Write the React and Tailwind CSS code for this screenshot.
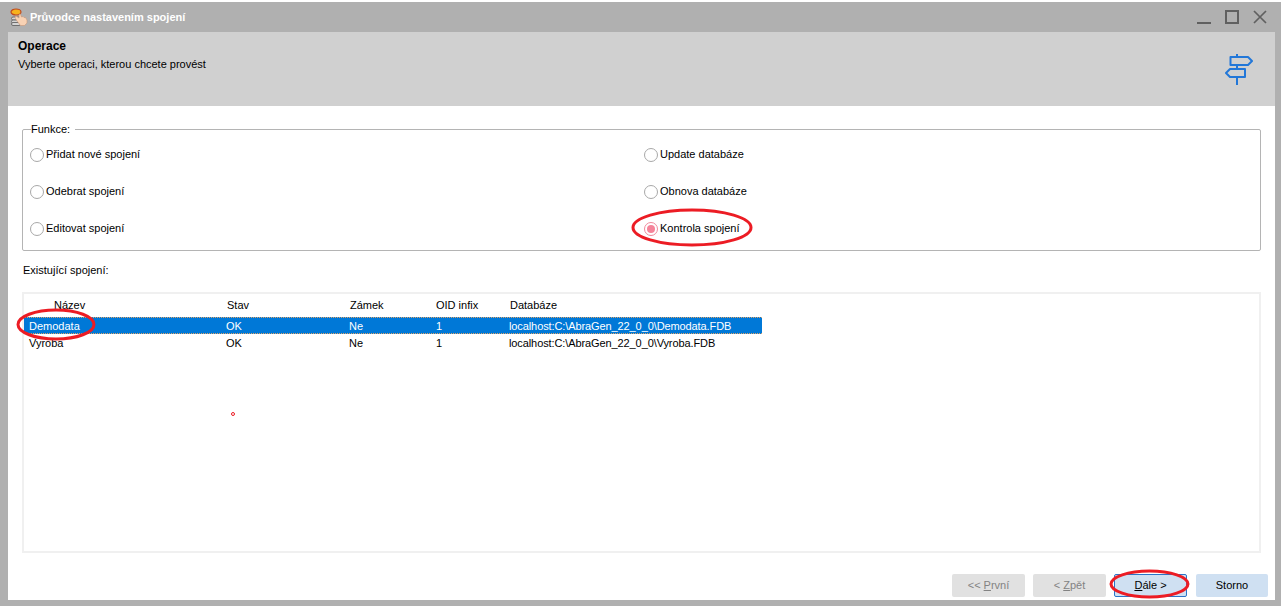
import React from 'react';

const FONT = "font-['Liberation_Sans',Arial,sans-serif]";

const AppIcon = () => (
    <svg width="18" height="18" viewBox="0 0 18 18" className="mr-[2px] shrink-0">
        <rect x="1.5" y="9" width="9" height="3" rx="1.5" fill="#d4d4d4" stroke="#6f6f6f" />
        <rect x="1.5" y="12" width="9" height="3" rx="1.5" fill="#d4d4d4" stroke="#6f6f6f" />
        <rect x="1.5" y="14.5" width="9" height="3" rx="1.5" fill="#d4d4d4" stroke="#6f6f6f" />
        <ellipse cx="6" cy="4" rx="5" ry="3" fill="#f7b21c" stroke="#c04a1e" strokeWidth="1.2" />
        <path d="M5 9L6 8L9 10V6.5L10.5 6L11.5 9L13 8.5L14 9.5L15.5 9.5L17 12V15L14.5 17.5H10.5L7 13L5.5 10.5Z" fill="#f8d2b4" stroke="#c8977a" strokeWidth="0.6" />
    </svg>
);

const SignpostIcon = () => (
    <svg width="28" height="31" viewBox="0 0 28 31" fill="none" stroke="#2277d8" strokeWidth="2">
        <path d="M12 0V3M12 11V15M12 23V31" />
        <path d="M5.5 3H23L27 7L23 11H5.5Z" strokeLinejoin="round" />
        <path d="M20 15H5L1 19L5 23H20Z" strokeLinejoin="round" />
    </svg>
);

const Radio = ({ label, checked }) => (
    <div className="flex items-center h-[37px]">
        <span className={`flex items-center justify-center w-[14px] h-[14px] rounded-full border bg-white mr-[1px] ${checked ? 'border-[#f08a9c]' : 'border-[#a8a8a8]'}`}>
            {checked && <span className="w-[8px] h-[8px] rounded-full bg-[#f5849a]" />}
        </span>
        <span className="ml-[1px]">{label}</span>
    </div>
);

const headColumns = [
    { w: 'w-[203px]', head: 'Název', pl: 'pl-[30px]' },
    { w: 'w-[123px]', head: 'Stav' },
    { w: 'w-[86px]', head: 'Zámek' },
    { w: 'w-[74px]', head: 'OID infix' },
    { w: 'w-[252px]', head: 'Databáze' },
];

const cellWidths = ['w-[202px]', 'w-[123px]', 'w-[87px]', 'w-[73px]', 'w-[253px] tracking-[-0.1px]'];

const rows = [
    ['Demodata', 'OK', 'Ne', '1', 'localhost:C:\\AbraGen_22_0_0\\Demodata.FDB'],
    ['Vyroba', 'OK', 'Ne', '1', 'localhost:C:\\AbraGen_22_0_0\\Vyroba.FDB'],
];

const Button = ({ children, variant }) => {
    const styles = {
        disabled: 'w-[73px] bg-[#e1e1e1] text-[#838383]',
        primary: 'w-[73px] bg-[#cfe0f2] text-black border border-[#2b74c8]',
        normal: 'w-[72px] ml-[1px] bg-[#cfe0f2] text-black',
    };
    return <button className={`h-[23px] rounded-[2px] ${styles[variant]}`}>{children}</button>;
};

const Ring = ({ className, w, h, sw = 3 }) => (
    <svg width={w} height={h} viewBox={`0 0 ${w} ${h}`} fill="none" className={`absolute ${className}`}>
        <ellipse cx={w / 2} cy={h / 2} rx={w / 2 - 2} ry={h / 2 - 2} stroke="#ec1c24" strokeWidth={sw} />
    </svg>
);

export default function App() {
    return (
        <div className={`${FONT} relative w-[1283px] h-[606px] bg-white pt-[2px] text-[11px] leading-none text-black overflow-hidden`}>
            {/* Window */}
            <div className="w-[1281px] h-[604px] bg-[#b0b0b0] flex flex-col">
                {/* Title bar */}
                <div className="h-[30px] shrink-0 flex items-center pl-[10px] pr-[14px]">
                    <AppIcon />
                    <span className="font-bold text-white">Průvodce nastavením spojení</span>
                    <div className="ml-auto flex items-center gap-[14px]">
                        <svg width="14" height="14" viewBox="0 0 14 14" stroke="#606060" strokeWidth="2" fill="none"><path d="M0 13H14" /></svg>
                        <svg width="14" height="14" viewBox="0 0 14 14" stroke="#606060" strokeWidth="2" fill="none"><rect x="1" y="1" width="12" height="12" /></svg>
                        <svg width="14" height="14" viewBox="0 0 14 14" stroke="#606060" strokeWidth="1.7" fill="none"><path d="M1 1L13 13M13 1L1 13" /></svg>
                    </div>
                </div>

                {/* Content */}
                <div className="flex-1 ml-[8px] mr-[6px] mb-[6px] bg-white flex flex-col">
                    <div className="h-[74px] shrink-0 bg-[#d0d0d0] flex justify-between pl-[10px] pr-[22px]">
                        <div className="pt-[7px]">
                            <div className="font-bold text-[12px] leading-[14px]">Operace</div>
                            <div className="mt-[5px] leading-[13px]">Vyberte operaci, kterou chcete provést</div>
                        </div>
                        <div className="pt-[22px]"><SignpostIcon /></div>
                    </div>

                    <div className="flex-1 pl-[14px] pr-[14px] flex flex-col">
                        {/* Funkce */}
                        <fieldset className="mt-[17px] h-[128px] border border-[#b4b4b4] rounded-[2px] pl-[7px]">
                            <legend className="ml-[1px] pr-[5px] leading-[13px]">Funkce:</legend>
                            <div className="grid grid-cols-[614px_1fr]">
                                <div>
                                    <Radio label="Přidat nové spojení" />
                                    <Radio label="Odebrat spojení" />
                                    <Radio label="Editovat spojení" />
                                </div>
                                <div>
                                    <Radio label="Update databáze" />
                                    <Radio label="Obnova databáze" />
                                    <Radio label="Kontrola spojení" checked />
                                </div>
                            </div>
                        </fieldset>

                        <div className="mt-[13px] pl-[1px] leading-[13px]">Existující spojení:</div>

                        {/* List */}
                        <div className="mt-[15px] h-[261px] border-2 border-[#f0f0f0]">
                            <div className="flex h-[23px] items-center">
                                {headColumns.map((c) => (
                                    <div key={c.head} className={`${c.w} ${c.pl || ''} shrink-0`}>{c.head}</div>
                                ))}
                            </div>
                            {rows.map((row, i) => (
                                <div key={row[0]} className={`flex w-[738px] h-[17px] items-center pt-[1px] ${i === 0 ? 'bg-[#0078d7] text-white border-y border-dotted border-[#e0a468]' : ''}`}>
                                    {row.map((cell, j) => (
                                        <div key={j} className={`${cellWidths[j]} ${j === 0 ? 'pl-[5px]' : ''} shrink-0 whitespace-nowrap`}>{cell}</div>
                                    ))}
                                </div>
                            ))}
                        </div>

                        {/* Buttons */}
                        <div className="mt-[21px] flex justify-end gap-[8px] -mr-[7px]">
                            <Button variant="disabled">&lt;&lt; <u>P</u>rvní</Button>
                            <Button variant="disabled">&lt; <u>Z</u>pět</Button>
                            <Button variant="primary"><u>D</u>ále &gt;</Button>
                            <Button variant="normal">Storno</Button>
                        </div>
                    </div>
                </div>
            </div>

            {/* Red annotations drawn over the screenshot */}
            <Ring className="left-[16px] top-[308px]" w={80} h={33} />
            <Ring className="left-[631px] top-[208px]" w={122} h={39} />
            <Ring className="left-[1109px] top-[569px]" w={81} h={30} />
            <span className="absolute left-[231px] top-[412px] w-[4px] h-[4px] rounded-full border border-[#ec1c24]" />
        </div>
    );
}
